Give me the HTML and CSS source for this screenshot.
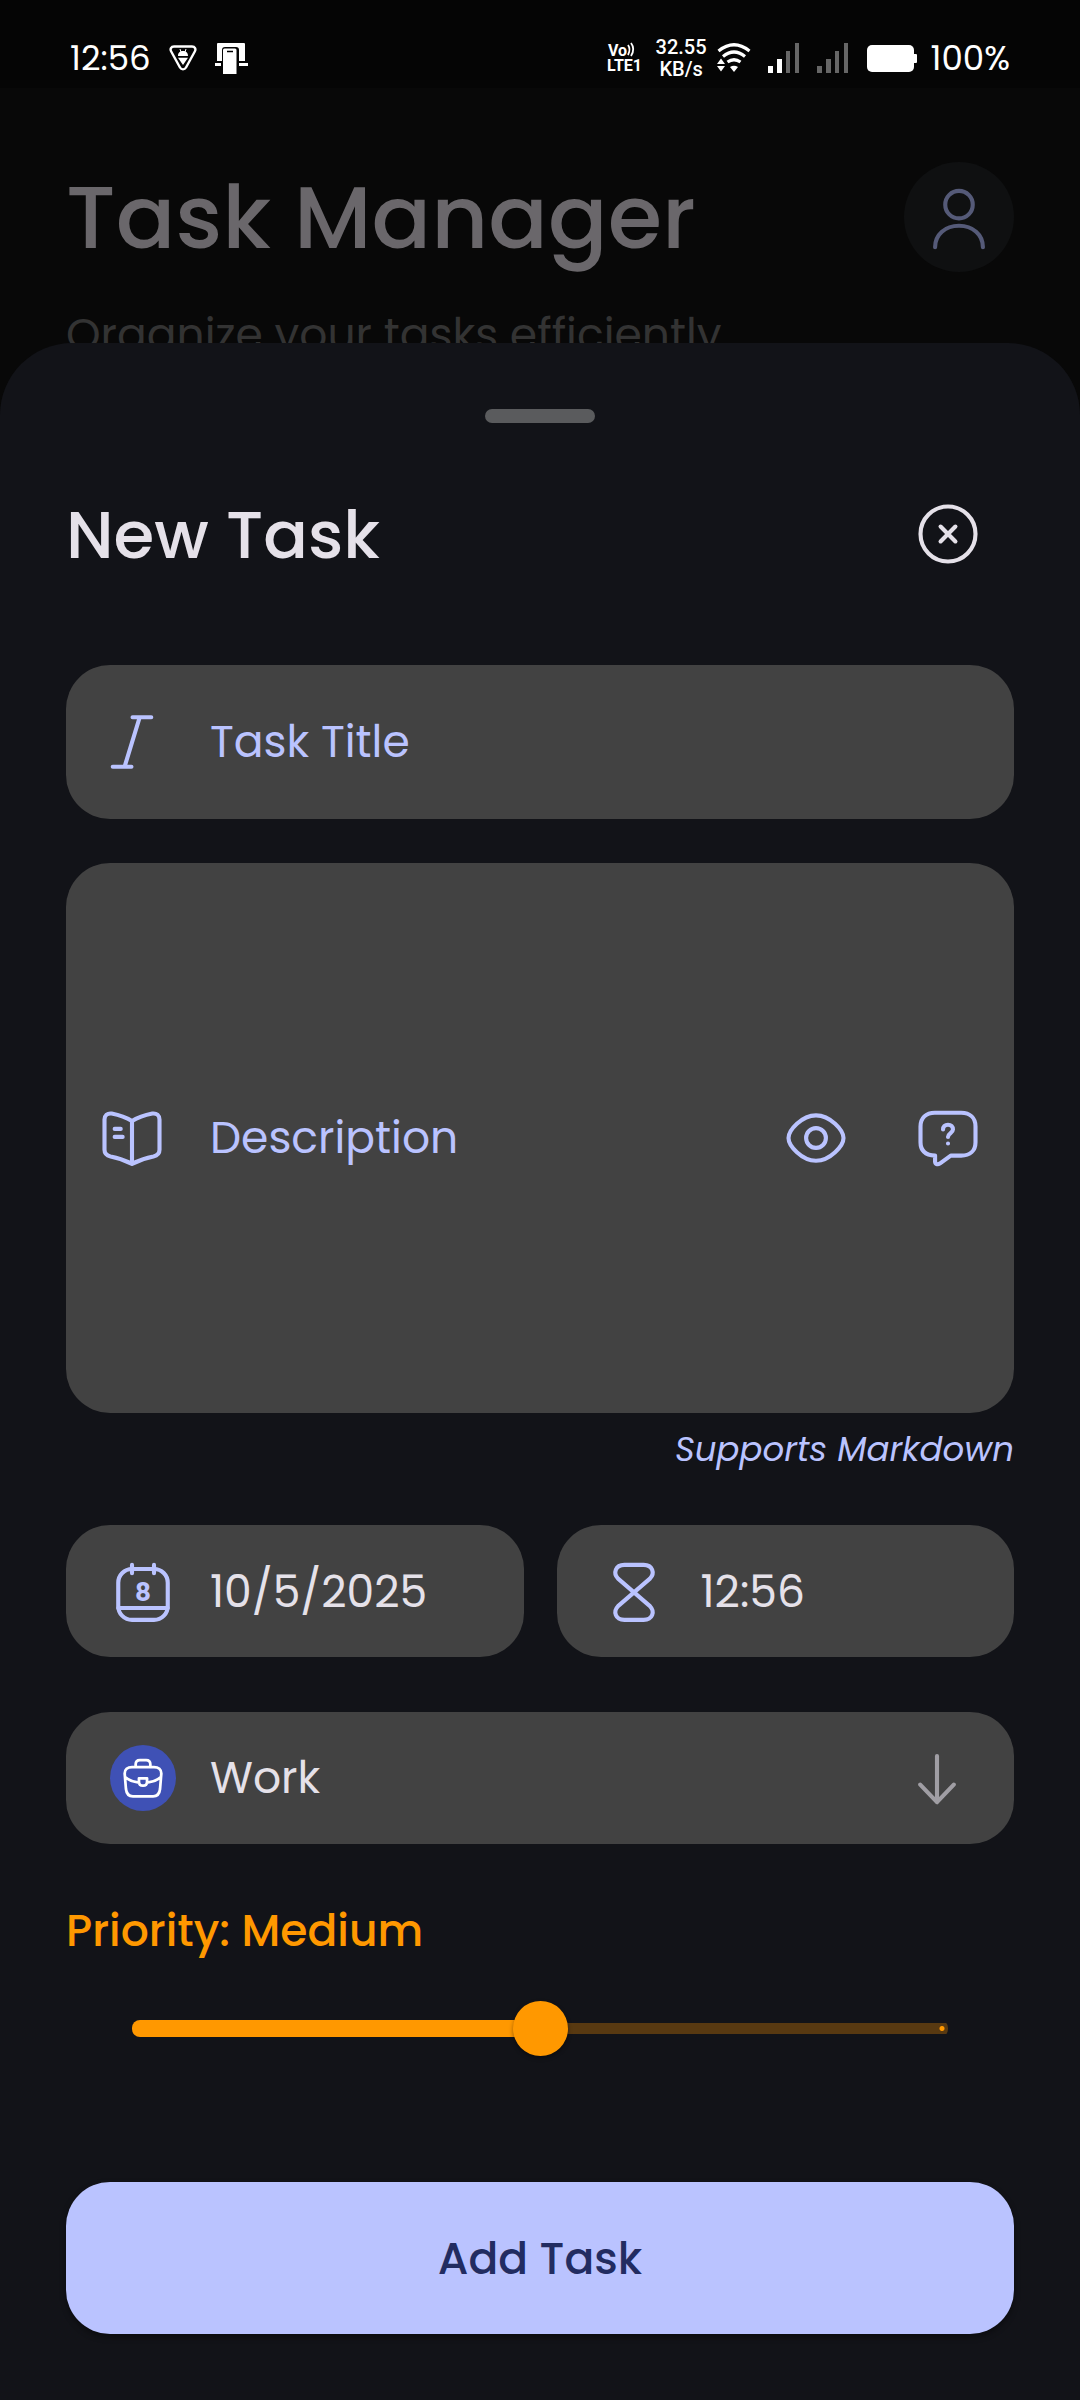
FILE: index.html
```html
<!DOCTYPE html>
<html lang="en">
<head>
<meta charset="utf-8">
<meta name="viewport" content="width=device-width, initial-scale=1">
<title>Task Manager</title>
<link rel="stylesheet" href="styles.css">
</head>
<body>
<div class="status">
  <div class="status-group status-left">
    <span class="clock">12:56</span>
    <svg class="shield" viewBox="0 0 28 26" width="28" height="26" aria-hidden="true"><path d="M5 1.500H23C26 1.500 27.200 4 25.800 6.500L17 22.500C15.600 25 12.400 25 11 22.500L2.200 6.500C.8 4 2 1.500 5 1.500Z" fill="none" stroke="#fff" stroke-width="2.400"/><path d="M9 11C9 7.500 11 6 14 6S19 7.500 19 11ZM9 12.800H19L14 20Z" fill="#fff"/><path d="M11 4L12 7M17 4L16 7" stroke="#fff"/></svg>
    <svg viewBox="0 0 33 31" width="33" height="31" aria-hidden="true"><path d="M2 1Q2 0 3 0H29Q30 0 30 1V18H24V7Q24 4 21 4H10Q7 4 7 7V18H2ZM0 20H6V23H0ZM24 20H33V23H24ZM8 7Q8 5.500 9.500 5.500H20Q21.500 5.500 21.500 7V31H8Z" fill="#fff"/><path d="M12 8.500H18" stroke="#000" stroke-width="1.500"/></svg>
  </div>
  <div class="status-group">
    <svg viewBox="0 0 40 36" width="40" height="36" aria-hidden="true"><text class="volte" x="2" y="16">Vo</text><text class="volte" x="1" y="31">LTE1</text><path d="M22 5Q25 9 22 15M25 3Q29.500 9 25 16" fill="none" stroke="#fff" stroke-width="1.800"/></svg>
    <span class="speed">32.55<br>KB/s</span>
    <svg viewBox="0 0 34 30" width="34" height="30" aria-hidden="true"><g fill="none" stroke="#fff" stroke-width="3.200"><path d="M1.500 8Q17 -4.500 32.500 8M6 13.500Q17 4.500 28 13.500M10.500 19Q17 14.500 23.500 19"/></g><path d="M13 24Q17 21.500 21 24L17 29ZM0 21L4 15.500L8 21ZM0 23H8L4 28.500Z" fill="#fff"/></svg>
    <svg class="signal" viewBox="0 0 32 30" width="32" height="30" aria-hidden="true"><path d="M0 23H5V30H0ZM9 16H14V30H9Z" fill="#fff"/><path d="M18 8H22V30H18ZM27 0H31V30H27Z" fill="#666"/></svg>
    <svg class="signal" viewBox="0 0 32 30" width="32" height="30" aria-hidden="true"><path d="M0 23H5V30H0ZM9 16H14V30H9ZM18 8H22V30H18ZM27 0H31V30H27Z" fill="#666"/></svg>
    <svg class="battery" viewBox="0 0 50 27" width="50" height="27" aria-hidden="true"><rect width="47" height="27" rx="5" fill="#fff"/><rect x="44" y="9" width="6" height="9" rx="1" fill="#fff"/></svg>
    <span class="percent">100%</span>
  </div>
</div>

<header class="home">
  <div class="home-row">
    <h1 class="home-title">Task Manager</h1>
    <span class="avatar">
      <svg class="icon" viewBox="0 0 24 24" aria-hidden="true"><circle cx="12" cy="7.500" r="5"/><path d="M3.300 23C3.300 18.400 7 15.200 12 15.200S20.700 18.400 20.700 23"/></svg>
    </span>
  </div>
  <p class="home-subtitle">Organize your tasks efficiently</p>
</header>

<main class="sheet">
  <div class="handle"></div>
  <div class="sheet-head">
    <h2 class="sheet-title">New Task</h2>
    <button class="icon-button close" type="button" aria-label="Close">
      <svg class="icon" viewBox="0 0 24 24" aria-hidden="true"><circle cx="12" cy="12" r="10"/><path d="M14.700 14.700L9.300 9.300M14.700 9.300L9.300 14.700"/></svg>
    </button>
  </div>
  <form class="form">
    <label class="field field-title">
      <span class="lead"><svg class="icon" viewBox="0 0 24 24" aria-hidden="true"><path d="M12.200 3H19M5 21H11.800M14.800 3L9.300 21"/></svg></span>
      <input class="entry" type="text" placeholder="Task Title" aria-label="Task Title">
    </label>
    <div class="field field-description">
      <label class="lead" for="description"><svg class="icon" viewBox="0 0 24 24" aria-hidden="true"><path d="M12 5.800C10 4.600 7.500 3.700 4.600 3.100C3 2.900 2 3.800 2 5.300V16.300C2 17.800 2.800 18.400 4.200 18.700C7.500 19.300 9.700 20.200 12 21.400C14.300 20.200 16.500 19.300 19.800 18.700C21.200 18.400 22 17.800 22 16.300V5.300C22 3.800 21 2.900 19.400 3.100C16.500 3.700 14 4.600 12 5.800ZM12 5.800V21.400M5.700 8.700H7.900M5.700 11.600H8.600"/></svg></label>
      <textarea class="entry" id="description" rows="1" placeholder="Description" aria-label="Description"></textarea>
      <button class="icon-button" type="button" aria-label="Preview">
        <svg class="icon" viewBox="0 0 24 24" aria-hidden="true"><path d="M2 12C2 9.200 6.800 3.750 12 3.750S22 9.200 22 12S17.200 20.250 12 20.250S2 14.800 2 12Z"/><circle cx="12" cy="12" r="3.600"/></svg>
      </button>
      <button class="icon-button" type="button" aria-label="Markdown help">
        <svg class="icon" viewBox="0 0 24 24" aria-hidden="true"><path d="M7.200 2.800H16.800C20 2.800 22 4.700 22 7.800V13.500C22 16.600 20 18.400 16.800 18.400H13L9 21.300C8.200 21.800 7.300 21.500 7.300 20.500V18.400C4 18.200 2 16.600 2 13.500V7.800C2 4.700 4 2.800 7.200 2.800Z"/><path d="M10.200 8.900C10.200 7.900 10.900 7.200 12 7.200S13.800 7.900 13.800 8.900C13.800 10.100 12 10.300 12 11.600M12 14V14.010"/></svg>
      </button>
    </div>
    <p class="hint">Supports Markdown</p>
    <div class="when">
      <button class="field picker" type="button">
        <svg class="icon" viewBox="0 0 24 24" aria-hidden="true"><rect x="3" y="4" width="18" height="18.500" rx="5"/><path d="M8 2.500V5.500M16 2.500V5.500M3 18.200H21"/><text class="day" x="12" y="15.500">8</text></svg>
        <span>10/5/2025</span>
      </button>
      <button class="field picker" type="button">
        <svg class="icon" viewBox="0 0 24 24" aria-hidden="true"><path d="M8.500 2.500H15.500C18.800 2.500 19.700 5.500 17.800 7.500L6.200 17.500C4.300 19.500 5.200 22.500 8.500 22.500H15.500C18.800 22.500 19.700 19.500 17.800 17.500L6.200 7.500C4.300 5.500 5.200 2.500 8.500 2.500Z"/></svg>
        <span>12:56</span>
      </button>
    </div>
    <label class="field picker category">
      <span class="badge"><svg class="icon icon-small" viewBox="0 0 24 24" aria-hidden="true"><path d="M8 6V4.500Q8 2.200 10.300 2.200H13.700Q16 2.200 16 4.500V6M6 6H18C20.500 6 22 7.500 22 9.500L21.300 18C21 20.700 20 22 17.500 22H6.500C4 22 3 20.700 2.700 18L2 9.500C2 7.500 3.500 6 6 6ZM2.200 11.500Q5 14 9.800 14.500M21.800 11.500Q19 14 14.200 14.500M9.800 12.200H14.200V14Q14.200 16.200 12 16.200T9.800 14Z"/></svg></span>
      <select class="entry select" aria-label="Category"><option>Work</option></select>
      <svg class="icon arrow" viewBox="0 0 24 24" aria-hidden="true"><path d="M12 4V20.800M5.900 14.400L12 20.800L18.100 14.400"/></svg>
    </label>
    <label class="priority" for="priority">Priority: Medium</label>
    <input class="slider" id="priority" type="range" min="0" max="2" value="1">
    <button class="submit" type="submit">Add Task</button>
  </form>
</main>
</body>
</html>
```
FILE: styles.css
```css
* { box-sizing: border-box; }

body {
  margin: 0;
  min-height: 100vh;
  display: flex;
  flex-direction: column;
  background: #080808;
  color: #e5e1e9;
  font-family: Poppins, Inter, sans-serif;
  font-size: 44px;
}

h1, h2, p { margin: 0; font-weight: 500; }

button, input, textarea, select {
  font: inherit;
  color: inherit;
  background: none;
  border: 0;
  padding: 0;
  margin: 0;
}

svg { display: block; flex: none; }

.icon {
  width: 66px;
  height: 66px;
  fill: none;
  stroke: currentColor;
  stroke-width: 1.5;
  stroke-linecap: round;
  stroke-linejoin: round;
}
.icon-small { width: 44px; height: 44px; }

/* Status bar */
.status {
  display: flex;
  justify-content: space-between;
  align-items: center;
  height: 88px;
  padding: 28px 70px 0;
  background: #050505;
  color: #fff;
}
.status-group { display: flex; align-items: center; gap: 10px; }
.status-left { gap: 18px; }
.clock, .percent { font-size: 34px; line-height: 40px; }
.percent { margin-left: 4px; }
.speed { font-family: Roboto, sans-serif; font-size: 20px; line-height: 22px; font-weight: 500; text-align: center; }
.volte { fill: #fff; font-family: Roboto, sans-serif; font-size: 16px; font-weight: 700; }
.signal { margin-left: 7px; }
.battery { margin-left: 8px; }

/* Dimmed page behind the sheet */
.home { padding: 74px 66px 0; }
.home-row { display: flex; justify-content: space-between; align-items: center; height: 110px; }
.home-title { padding-top: 2px; font-size: 88px; line-height: 110px; color: #6a676b; }
.avatar {
  display: flex;
  align-items: center;
  justify-content: center;
  width: 110px;
  height: 110px;
  border-radius: 50%;
  background: #0f1011;
  color: #555a78;
}
.home-subtitle { margin-top: 33px; font-size: 44px; line-height: 60px; font-weight: 400; color: #333; }

/* Bottom sheet */
.sheet {
  position: relative;
  flex: 1;
  margin-top: -22px;
  padding: 66px 66px 64px;
  border-radius: 72px 72px 0 0;
  background: #121318;
}
.handle { width: 110px; height: 14px; margin: 0 auto; border-radius: 7px; background: #5a5b5d; }
.sheet-head { display: flex; justify-content: space-between; align-items: center; margin: 45px 0 65px; }
.sheet-title { padding-top: 2px; font-size: 66px; line-height: 80px; }
.icon-button {
  display: flex;
  flex: none;
  align-items: center;
  justify-content: center;
  width: 132px;
  height: 132px;
  color: #bac3ff;
}
.close { color: #e5e1e9; }

.form { display: flex; flex-direction: column; }
.field {
  display: flex;
  align-items: center;
  border-radius: 44px;
  background: #424242;
}
.field-title { min-height: 154px; margin-bottom: 44px; }
.field-description { min-height: 550px; }
.lead { display: flex; flex: none; justify-content: center; width: 144px; padding-right: 12px; color: #bac3ff; }
.entry { flex: 1; min-width: 0; height: 66px; line-height: 66px; outline: 0; resize: none; overflow: hidden; }
.entry::placeholder { color: #bac3ff; opacity: 1; }

.hint { margin-top: 12px; font-size: 34px; line-height: 48px; font-weight: 400; font-style: italic; text-align: right; color: #bac3ff; }

.when { display: grid; grid-template-columns: 1fr 1fr; gap: 33px; margin: 52px 0 55px; }
.picker { gap: 34px; height: 132px; padding: 0 44px; }
.picker > .icon { color: #bac3ff; }
.day { fill: currentColor; stroke: none; font-size: 9px; font-weight: 700; text-anchor: middle; }
.badge {
  display: flex;
  flex: none;
  align-items: center;
  justify-content: center;
  width: 66px;
  height: 66px;
  border-radius: 50%;
  background: #3f51b5;
  color: #fff;
}
.select { appearance: none; }
.category > .arrow { color: #a09ea4; }

.priority { margin-top: 54px; line-height: 66px; font-weight: 500; color: #ff9800; }

.slider { appearance: none; height: 66px; margin: 31px 66px 0; outline: 0; }
.slider::-webkit-slider-runnable-track {
  height: 17px;
  border-radius: 8px;
  background:
    radial-gradient(circle at calc(100% - 6px) 50%, #ff9800 2px, transparent 3px),
    linear-gradient(#ff9800, #ff9800) left / 50% 100% no-repeat,
    linear-gradient(#583911, #583911) center / 100% 11px no-repeat;
}
.slider::-webkit-slider-thumb {
  appearance: none;
  width: 55px;
  height: 55px;
  margin-top: -19px;
  border-radius: 50%;
  background: #ff9800;
  box-shadow: 0 2px 4px rgba(0, 0, 0, .4);
}

.submit {
  height: 152px;
  margin-top: 121px;
  border-radius: 44px;
  background: #bac3ff;
  box-shadow: 0 3px 6px rgba(0, 0, 0, .4);
  color: #222c61;
  font-weight: 500;
}
```
